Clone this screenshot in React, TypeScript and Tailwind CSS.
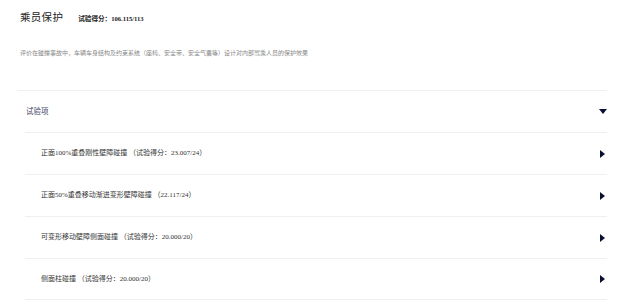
const rows = [
  "正面100%重叠刚性壁障碰撞 （试验得分：23.007/24）",
  "正面50%重叠移动渐进变形壁障碰撞 （22.117/24）",
  "可变形移动壁障侧面碰撞 （试验得分：20.000/20）",
  "侧面柱碰撞 （试验得分：20.000/20）",
];

const serif = { fontFamily: '"Liberation Serif", "Noto Sans CJK SC", serif' };

function Caret({ down }: { down?: boolean }) {
  return down ? (
    <svg width="8" height="5" viewBox="0 0 8 5" className="shrink-0">
      <path d="M0 0 H8 L4 5 Z" fill="#0b1033" />
    </svg>
  ) : (
    <svg width="5" height="8" viewBox="0 0 5 8" className="shrink-0">
      <path d="M0 0 L5 4 L0 8 Z" fill="#0b1033" />
    </svg>
  );
}

export default function App() {
  return (
    <main className="w-[630px] h-[306px] overflow-hidden bg-white" style={serif}>
      {/* 标题 */}
      <header className="flex items-baseline pl-[20px] pt-[10px] h-[30px]">
        <h1 className="text-[10.5px] leading-[16px] text-[#222] tracking-[0.3px]">乘员保护</h1>
        <span className="ml-[15px] text-[6.6px] font-bold text-[#222]">试验得分：106.115/113</span>
      </header>
      <p className="pl-[20px] mt-[19px] text-[6px] leading-[8px] text-[#888]">
        评价在碰撞事故中，车辆车身结构及约束系统（座椅、安全带、安全气囊等）设计对内部驾乘人员的保护效果
      </p>

      <section className="ml-[17px] mr-[23px] mt-[33px] border-t border-[#f0f0f0]">
        <div className="flex items-center justify-between h-[41px] pl-[9px]">
          <span className="text-[7.5px] text-[#3b4160]">试验项</span>
          <Caret down />
        </div>
        <ul className="ml-[8px]">
          {rows.map((r) => (
            <li
              key={r}
              className="flex items-center justify-between h-[42px] pl-[16px] pr-[2px] border-t border-[#f0f0f0] last:border-b"
            >
              <span className="text-[7px] text-[#333]">{r}</span>
              <Caret />
            </li>
          ))}
        </ul>
      </section>
    </main>
  );
}
